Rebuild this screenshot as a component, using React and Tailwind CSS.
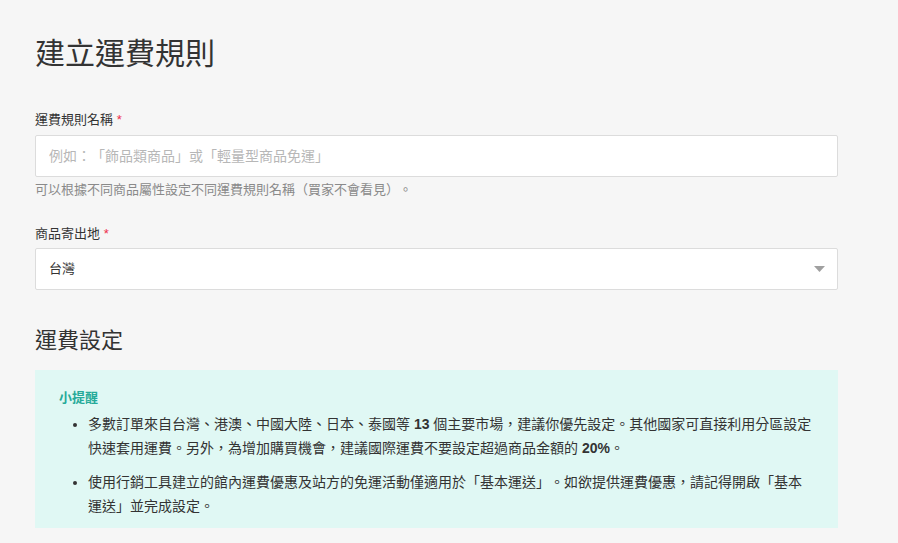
export default function App() {
  const font = { fontFamily: '"Liberation Sans", "Noto Sans CJK TC", sans-serif' };
  return (
    <div className="min-h-[543px] bg-[#f6f6f6] pl-[35px] pt-[36px] [text-spacing-trim:space-all]" style={font}>
      <div className="w-[803px]">
        <h1 className="text-[30px] leading-[36px] text-[#333]">建立運費規則</h1>

        <div className="mt-[39px]">
          <label className="block text-[13px] leading-[18px] text-[#333]">
            運費規則名稱 <span className="text-[#ee2c4a]">*</span>
          </label>
          <input
            type="text"
            placeholder="例如：「飾品類商品」或「輕量型商品免運」"
            className="mt-[6px] block h-[42px] w-full rounded-[2px] border border-[#dcdcdc] bg-white px-[13px] text-[14px] text-[#333] placeholder:text-[#b7b7b7] outline-none [text-spacing-trim:space-all]"
          />
          <p className="mt-[4px] text-[13px] leading-[18px] text-[#8a8a8a]">
            可以根據不同商品屬性設定不同運費規則名稱（買家不會看見）。
          </p>
        </div>

        <div className="mt-[26px]">
          <label className="block text-[13px] leading-[18px] text-[#333]">
            商品寄出地 <span className="text-[#ee2c4a]">*</span>
          </label>
          <div className="mt-[5px] flex h-[42px] w-full items-center justify-between rounded-[2px] border border-[#dcdcdc] bg-white pl-[13px] pr-[12px]">
            <span className="text-[13px] text-[#333]">台灣</span>
            <svg width="11" height="6" viewBox="0 0 11 6">
              <path d="M0 0h11L5.5 6z" fill="#a0a0a0" />
            </svg>
          </div>
        </div>

        <h2 className="mt-[36px] text-[22px] leading-[30px] text-[#333]">運費設定</h2>

        <div className="mt-[14px] bg-[#e0f8f4] pl-[24px] pr-[24px] pt-[18px] pb-[10px]">
          <div className="text-[13px] font-bold leading-[20px] text-[#26aa99]">小提醒</div>
          <ul className="mt-[4px] list-disc pl-[29px] text-[14px] leading-[24px] text-[#333] marker:text-[#333]">
            <li className="mb-[10px]">
              多數訂單來自台灣、港澳、中國大陸、日本、泰國等 <b>13</b> 個主要市場，建議你優先設定。其他國家可直接利用分區設定
              <br />
              快速套用運費。另外，為增加購買機會，建議國際運費不要設定超過商品金額的 <b>20%</b>。
            </li>
            <li>
              使用行銷工具建立的館內運費優惠及站方的免運活動僅適用於「基本運送」。如欲提供運費優惠，請記得開啟「基本
              <br />
              運送」並完成設定。
            </li>
          </ul>
        </div>
      </div>
    </div>
  );
}
